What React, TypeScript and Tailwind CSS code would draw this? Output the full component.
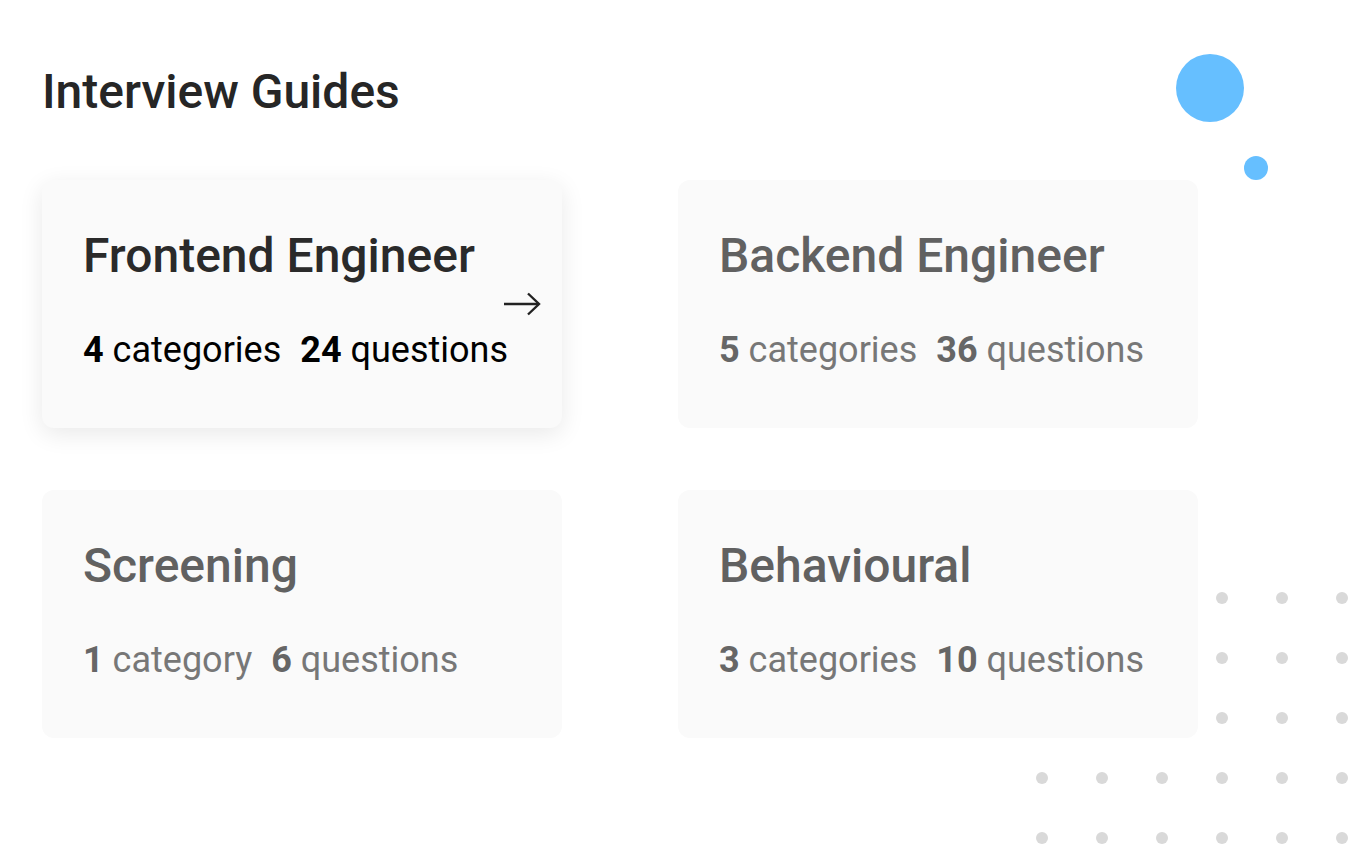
import React from "react";

// Interview guides overview: a heading, a 2x2 grid of guide cards and some decoration.

type Guide = { title: string; categories: number; questions: number; active?: boolean };

const GUIDES: Guide[] = [
  { title: "Frontend Engineer", categories: 4, questions: 24, active: true },
  { title: "Backend Engineer", categories: 5, questions: 36 },
  { title: "Screening", categories: 1, questions: 6 },
  { title: "Behavioural", categories: 3, questions: 10 },
];

function ArrowRight() {
  return (
    <svg width="38" height="24" viewBox="0 0 38 24" fill="none" stroke="#222" strokeWidth="2.4">
      <path d="M1 12h35" />
      <path d="M25 1.5l11 10.5-11 10.5" />
    </svg>
  );
}

function GuideCard({ guide }: { guide: Guide }) {
  const { title, categories, questions, active } = guide;
  return (
    <div
      className={
        active
          ? "relative h-[248px] rounded-xl bg-[#fafafa] pl-[41px] pt-[48px] shadow-[0_6px_24px_rgba(0,0,0,0.09)]"
          : "relative h-[248px] rounded-xl bg-[#fafafa] pl-[41px] pt-[48px]"
      }
    >
      <h2 className={active ? "text-[48px] font-medium leading-[56px] text-[#2a2a2a]" : "text-[48px] font-medium leading-[56px] text-[#616161]"}>
        {title}
      </h2>
      <p className={active ? "mt-[45px] text-[36px] leading-[42px] text-black" : "mt-[45px] text-[36px] leading-[42px] text-[#777]"}>
        <span className={active ? "font-bold" : "font-bold text-[#666]"}>{categories}</span>{" "}
        {categories === 1 ? "category" : "categories"}
        <span className="inline-block w-[19px]" />
        <span className={active ? "font-bold" : "font-bold text-[#666]"}>{questions}</span> questions
      </p>
      {active && (
        <div className="absolute right-[21px] top-[112px]">
          <ArrowRight />
        </div>
      )}
    </div>
  );
}

// 6 x 5 grid of grey dots; the top three rows only fill the right half.
function DotGrid() {
  const cells = Array.from({ length: 30 }, (_, i) => i < 18 && i % 6 < 3);
  return (
    <div className="absolute left-[1036px] top-[592px] grid grid-cols-[repeat(6,12px)] gap-[48px]">
      {cells.map((hidden, i) => (
        <div key={i} className={hidden ? "h-[12px] w-[12px]" : "h-[12px] w-[12px] rounded-full bg-[#d9d9d9]"} />
      ))}
    </div>
  );
}

export default function App() {
  return (
    <div
      className="relative h-[860px] w-[1356px] overflow-hidden bg-white"
      style={{ fontFamily: "Roboto, 'Liberation Sans', sans-serif" }}
    >
      {/* decoration: blue bubbles */}
      <div className="absolute left-[1176px] top-[54px] h-[68px] w-[68px] rounded-full bg-[#66bfff]" />
      <div className="absolute left-[1244px] top-[156px] h-[24px] w-[24px] rounded-full bg-[#66bfff]" />
      <DotGrid />

      <div className="relative pl-[42px] pt-[64px]">
        <h1 className="text-[48px] font-medium leading-[56px] text-[#262626]">Interview Guides</h1>
        <div className="mt-[60px] grid w-[1156px] grid-cols-[520px_520px] gap-x-[116px] gap-y-[62px]">
          {GUIDES.map((g) => (
            <GuideCard key={g.title} guide={g} />
          ))}
        </div>
      </div>
    </div>
  );
}
